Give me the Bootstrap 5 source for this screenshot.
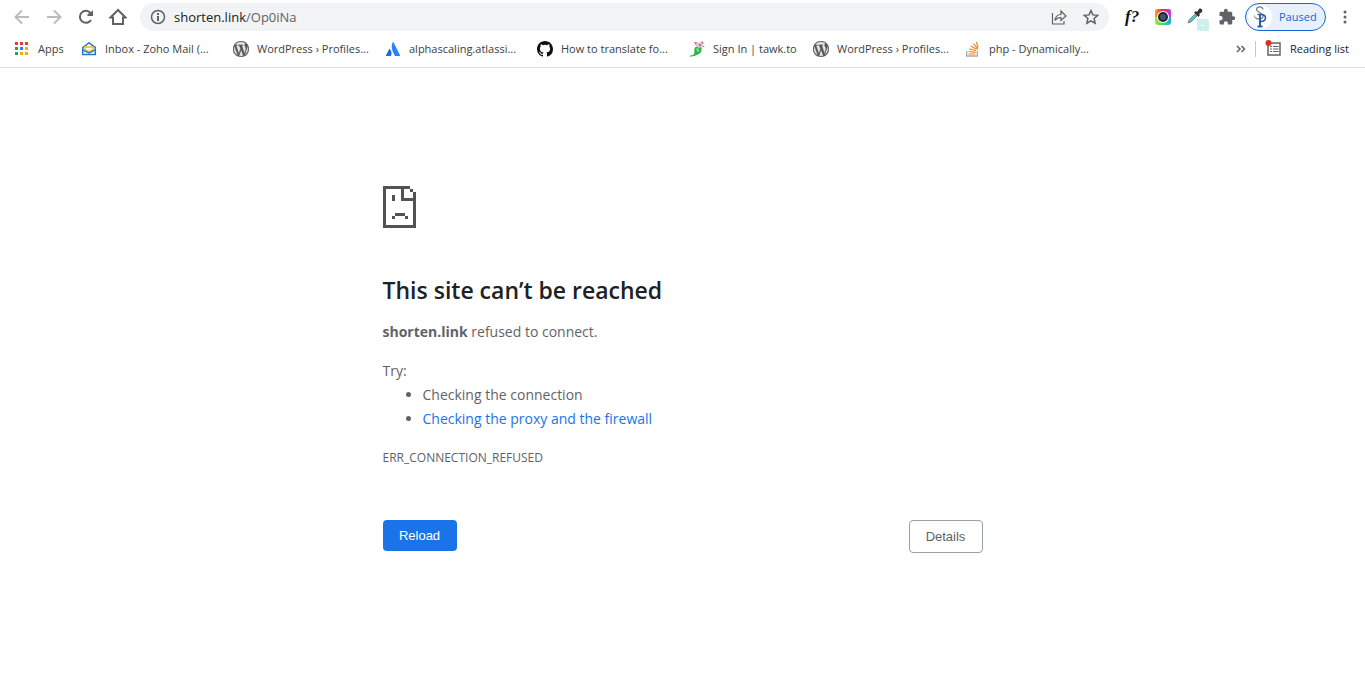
<!DOCTYPE html>
<html lang="en">
<head>
<meta charset="utf-8">
<meta name="viewport" content="width=device-width, initial-scale=1">
<title>shorten.link</title>
<link href="https://cdn.jsdelivr.net/npm/bootstrap@5.3.0/dist/css/bootstrap.min.css" rel="stylesheet">
<style>
  body { font-family: "Open Sans", "Noto Sans", sans-serif; color: #5f6368; background: #fff; font-size: 14px; }
  svg { display: block; flex-shrink: 0; }
  .tool-btn { border: 0; background: none; padding: 0; width: 32px; height: 32px; display: flex; align-items: center; justify-content: center; color: #5f6368; }
  .tool-btn:disabled { color: #babcbe; }
  .toolbar { height: 34px; padding: 0 4px 0 6px; }
  .omnibox { height: 28px; background: #f1f3f4; border-radius: 14px; margin: 0 6px; padding: 0 2px 0 10px; }
  .address { border: 0; background: none; outline: 0; padding: 0; width: 100%; opacity: 0; cursor: text; position: absolute; inset: 0; }
  .url-text { font-size: 13px; line-height: 20px; color: #5f6368; }
  .url-text b { color: #202124; font-weight: 400; }
  .profile { width: 81px; height: 28px; border: 1px solid #1967d2; border-radius: 14px; background: #e8f0fe; color: #1967d2; font-size: 11px; padding: 0 0 0 2px; gap: 7px; margin: 0 3px 0 2px; }
  .bookmarks { height: 34px; padding: 0 13px 4px 14px; border-bottom: 1px solid #dadce0; font-size: 11px; line-height: 16px; }
  .bookmarks a { color: #3c4043; text-decoration: none; display: flex; align-items: center; gap: 8px; flex-shrink: 0; white-space: nowrap; }
  .bm-apps { width: 67px; }
  .bm-long { width: 152px; }
  .bm-short { width: 124px; }
  .bm-reading { width: 87px; }
  .bm-divider { width: 1px; height: 16px; background: #c6c8cb; margin: 0 9px; }
  .error-page { max-width: 600px; margin: 118px auto 0; line-height: 24px; }
  .error-page h1 { font-size: 23px; line-height: 28px; font-weight: 600; color: #202124; margin: 48px 0 16px; }
  .error-page p { margin: 0 0 15px; }
  .error-page ul { padding-left: 40px; margin: 0 0 15px; }
  .error-page li a { color: #1a73e8; text-decoration: none; }
  .error-page .try-lead { margin: 0; }
  .error-page .err-code { font-size: 12px; margin: 0 0 50px; }
  .action { font-family: "Liberation Sans", Arial, sans-serif; font-size: 13px; line-height: 15px; padding: 8px 15px; width: 74px; border-radius: 4px; white-space: nowrap; }
  .action-reload { background: #1a73e8; border: 0; color: #fff; }
  .action-details { background: #fff; border: 1px solid #9aa0a6; color: #5f6368; }
</style>
</head>
<body>
<svg width="0" height="0" class="position-absolute" aria-hidden="true">
  <symbol id="wp" viewBox="0 0 24 24"><circle cx="12" cy="12" r="11" fill="#e4e4e4"/><path fill="#555" stroke="#555" stroke-width=".5" d="M12 0C5.400 0 0 5.400 0 12s5.400 12 12 12 12-5.400 12-12S18.600 0 12 0zm0 1.200c2.800 0 5.400 1.100 7.300 2.800h-.2c-1.100 0-1.800.9-1.800 1.900 0 .9.500 1.600 1.100 2.600.4.800.9 1.700.9 3.100 0 1-.4 2.100-.9 3.700l-1.100 3.800-4.100-12.300 1.300-.1c.6-.1.500-1-.1-.9 0 0-1.800.1-3 .1-1.100 0-3-.1-3-.1-.6 0-.7.900-.1.900l1.200.1 1.800 4.800-2.500 7.500L4.700 6.800 6 6.700c.6-.1.500-1-.1-.9 0 0-1.800.1-3 .1A10.800 10.800 0 0 1 12 1.200zM1.200 12c0-1.600.3-3 1-4.400l5.100 14.100A10.800 10.800 0 0 1 1.200 12zM12 22.800c-1.100 0-2.100-.2-3-.4l3.200-9.400 3.300 9.100.1.200c-1.100.3-2.300.5-3.600.5zm5.400-1.500 3.300-9.500c.6-1.500.8-2.800.8-3.900v-1a10.800 10.800 0 0 1-4.100 14.400z"/></symbol>
</svg>

<header>
  <div class="toolbar d-flex align-items-center">
    <button class="tool-btn" disabled aria-label="Back"><svg width="16" height="16" fill="none" stroke="currentColor" stroke-width="2"><path d="M15 8H2M8 1.500 1.500 8 8 14.500"/></svg></button>
    <button class="tool-btn" disabled aria-label="Forward"><svg width="16" height="16" fill="none" stroke="currentColor" stroke-width="2"><path d="M1 8h13M8 1.500 14.500 8 8 14.500"/></svg></button>
    <button class="tool-btn" aria-label="Reload page"><svg width="16" height="16"><path d="M13 11a6 6 0 1 1-.5-7L10 6.500" fill="none" stroke="currentColor" stroke-width="2"/><path fill="currentColor" d="M15 1v6H9z"/></svg></button>
    <button class="tool-btn" aria-label="Home"><svg width="18" height="18" fill="none" stroke="currentColor" stroke-width="2"><path d="M1.500 9.500 9 2l7.500 7.500H14V16H4V9.500z"/></svg></button>
    <div class="omnibox d-flex align-items-center flex-grow-1">
      <svg width="16" height="16" fill="none" stroke="#5f6368" stroke-width="1.500"><circle cx="8" cy="8" r="6.500"/><path stroke-width="2" d="M8 7v5M8 4v2"/></svg>
      <div class="position-relative flex-grow-1 ms-2 url-text"><b>shorten.link</b>/Op0iNa<input class="address" type="text" value="shorten.link/Op0iNa" aria-label="Address"></div>
      <button class="tool-btn" aria-label="Share"><svg width="18" height="18" fill="none" stroke="currentColor" stroke-width="1.200"><path d="M2.500 5v11H14v-3M5 12.500C5.500 8.500 8 6.500 11 6.500V3l5 5-5 4.500V9.500c-2.500 0-4.500.8-6 3z"/></svg></button>
      <button class="tool-btn" aria-label="Bookmark"><svg width="16" height="16" fill="none" stroke="currentColor" stroke-width="1.500"><path d="m8 1.500 1.900 4.400 4.800.4-3.600 3.200 1 4.700L8 11.800l-4.100 2.400 1-4.700-3.600-3.200 4.800-.4z"/></svg></button>
    </div>
    <button class="tool-btn" aria-label="Font finder"><svg width="18" height="20" overflow="visible"><text x="3" y="15" font-family="Liberation Serif, serif" font-style="italic" font-weight="700" font-size="17" fill="#111">f?</text></svg></button>
    <button class="tool-btn" aria-label="Color camera"><svg width="16" height="16"><defs><linearGradient id="rbTop"><stop offset="0" stop-color="#ffa321"/><stop offset=".45" stop-color="#f5284f"/><stop offset="1" stop-color="#c43af0"/></linearGradient><linearGradient id="rbBottom"><stop offset="0" stop-color="#b8e02a"/><stop offset=".5" stop-color="#2ee06a"/><stop offset="1" stop-color="#1fa7f5"/></linearGradient></defs><rect width="16" height="16" rx="3" fill="url(#rbBottom)"/><path d="M0 8V3a3 3 0 0 1 3-3h10a3 3 0 0 1 3 3v5z" fill="url(#rbTop)"/><circle cx="8" cy="8" r="6" fill="#fff"/><circle cx="8" cy="8" r="5" fill="#1b2733"/><circle cx="8" cy="8" r="3" fill="#40566a"/></svg></button>
    <button class="tool-btn" aria-label="Color picker"><svg width="24" height="26" overflow="visible"><path d="m5 19 1-3 6-6 2 2-6 6z" fill="#53c4c8" stroke="#777" stroke-width=".8"/><path d="M11 8.500 13 7l1 1 2-3c1.500-1.500 4.500 1 3 3l-3 2 1 1-1.500 2z" fill="#303336"/><rect x="14" y="15" width="12" height="12" rx="2" fill="#cdf0ee"/><path d="M18 21.500h3" stroke="#fff"/></svg></button>
    <button class="tool-btn" aria-label="Extensions"><svg width="18" height="18" viewBox="0 0 24 24" fill="currentColor"><path d="M20.500 11H19V7c0-1.100-.9-2-2-2h-4V3.500a2.500 2.500 0 0 0-5 0V5H4c-1.100 0-2 .9-2 2v3.800h1.500a2.700 2.700 0 0 1 0 5.400H2V20c0 1.100.9 2 2 2h3.800v-1.500a2.700 2.700 0 0 1 5.400 0V22H17c1.100 0 2-.9 2-2v-4h1.500a2.500 2.500 0 0 0 0-5z"/></svg></button>
    <button class="profile d-flex align-items-center"><svg width="24" height="24"><circle cx="12" cy="12" r="12" fill="#fff"/><g fill="none"><path d="M15 4.500C14.500 1 8.500 1 8.500 4.500c0 3 6.500 3 6.500 6.500 0 3-4 4-7 2" stroke="#7a8087" stroke-width="1.300"/><path d="M6.500 10.500c0 2 1 3 2.500 3.500" stroke="#7a8087"/><path d="M12 9.500V21M9.500 21.500h5" stroke="#2b5fa8" stroke-width="2"/><path d="M9.500 9.500h4c5.500 0 5.500 7.500-1.500 7" stroke="#2b5fa8" stroke-width="1.600"/></g></svg>Paused</button>
    <button class="tool-btn" aria-label="Menu"><svg width="4" height="14" fill="currentColor"><circle cx="2" cy="2" r="1.500"/><circle cx="2" cy="7" r="1.500"/><circle cx="2" cy="12" r="1.500"/></svg></button>
  </div>

  <nav class="bookmarks d-flex align-items-center" aria-label="Bookmarks">
    <a href="#" class="bm-apps"><svg width="16" height="16"><path fill="#ea3a32" d="M1 1h3v3H1zM6 1h3v3H6zM11 1h3v3h-3z"/><path fill="#2e9e54" d="M1 6h3v3H1zM1 11h3v3H1z"/><path fill="#2587ef" d="M6 6h3v3H6z"/><path fill="#f2ad12" d="M11 6h3v3h-3zM6 11h3v3H6zM11 11h3v3h-3z"/></svg>Apps</a>
    <a href="#" class="bm-long"><svg width="16" height="16" fill="none"><path d="M1.700 6.500 8 2l6.300 4.500v7H1.700z" stroke="#2876c7" stroke-width="1.500"/><path d="m2 9 6 3 6-3" stroke="#2876c7" stroke-width="1.500"/><path d="M4 8.500V6h8v2.500l-4 2z" fill="#fff" stroke="#f2b42c" stroke-width="1.300"/></svg>Inbox - Zoho Mail (...</a>
    <a href="#" class="bm-long"><svg width="16" height="16"><use href="#wp"/></svg>WordPress › Profiles...</a>
    <a href="#" class="bm-long"><svg width="16" height="16"><path fill="#1e6be0" d="M4.500 7.500C6.800 10 7 12.500 5.800 15H1.500c-.5 0-.7-.4-.5-.8z"/><path fill="#2684ff" d="M7.700 1.300c.2-.4.600-.4.800 0L15 14.200c.2.400 0 .8-.5.800H10C8.700 12 5 7.500 7.700 1.300z"/></svg>alphascaling.atlassi...</a>
    <a href="#" class="bm-long"><svg width="16" height="16" viewBox="0 0 16 16"><path fill="#111" d="M8 0C3.580 0 0 3.580 0 8c0 3.540 2.290 6.530 5.470 7.590.4.070.55-.17.55-.38 0-.19-.01-.82-.01-1.490-2.010.37-2.530-.49-2.690-.94-.09-.23-.48-.94-.82-1.130-.28-.15-.68-.52-.01-.53.63-.01 1.080.58 1.230.82.72 1.210 1.870.87 2.330.66.07-.52.28-.87.51-1.070-1.780-.2-3.640-.89-3.640-3.950 0-.87.31-1.590.82-2.150-.08-.2-.36-1.020.08-2.120 0 0 .67-.21 2.200.82a7.600 7.600 0 0 1 4 0c1.530-1.040 2.200-.82 2.200-.82.44 1.100.16 1.920.08 2.120.51.56.82 1.270.82 2.150 0 3.070-1.870 3.750-3.650 3.950.29.25.54.73.54 1.480 0 1.070-.01 1.930-.01 2.200 0 .21.15.46.55.38A8.010 8.010 0 0 0 16 8c0-4.420-3.580-8-8-8z"/></svg>How to translate fo...</a>
    <a href="#" class="bm-short"><svg width="16" height="16"><path fill="#2bb24c" d="M6.500 6 12 5c1.500 3 .5 7-3 8.500-2 .5-3 2-8.500 2-.5-1.500 3.500-.5 4.500-2.500C6 11 4.500 8 6.500 6z"/><path fill="#80d983" d="M7.500 7c2-.5 3 1 2.500 3.500-2 1.500-3-1-2.500-3.500z"/><path fill="#c9ccd0" d="M6 2c3-1.500 7-1 8 1.500.5 2-1 3.500-3 3C8.500 7.500 6 5 6 2z"/><path fill="#f45b9c" d="M5 1l3 .2L6.500 4zM11.500 1.500c1.500-2 3.500-.5 3 1.500zM13.500 5H16l-2 1.500z"/><circle cx="11" cy="4" r=".7" fill="#222"/></svg>Sign In | tawk.to</a>
    <a href="#" class="bm-long"><svg width="16" height="16"><use href="#wp"/></svg>WordPress › Profiles...</a>
    <a href="#"><svg width="16" height="16" fill="none"><path d="M1.700 10v5h10.600v-5" stroke="#a8abae" stroke-width="1.300"/><path d="M3.500 13h7M3.600 10.500l7 .8M4.200 7.800l6.700 2M5.800 5l6 3.600M8.500 2.500l4.200 5.300M11.500 1l1.500 5.500" stroke="#f48024" stroke-width="1.200"/></svg>php - Dynamically...</a>
    <a href="#" class="ms-auto" aria-label="More bookmarks"><svg width="10" height="8" fill="none" stroke="#5f6368" stroke-width="1.500"><path d="m1 1 3 3-3 3M5.500 1l3 3-3 3"/></svg></a>
    <span class="bm-divider"></span>
    <a href="#" class="bm-reading"><svg width="17" height="17" fill="none"><path d="M3 3h12v12H3z" stroke="#5f6368" stroke-width="1.500"/><path d="M5 6.500h2M8 6.500h5.500M5 9h2M8 9h5.500M5 11.500h2M8 11.500h5.500" stroke="#5f6368"/><circle cx="3.500" cy="3" r="3" fill="#d93025"/></svg><span class="text-dark">Reading list</span></a>
  </nav>
</header>

<main class="error-page">
  <svg width="33" height="42" fill="#535353" shape-rendering="crispEdges" role="img" aria-label="Sad page"><path d="M0 0h27v3H3v36h27V15H18V3h3v9h9V6h3v36H0zM27 3h3v3h-3zM9 9h3v6H9zM12 27h10v3H12zM9 30h3v3H9zM22 30h3v3h-3z"/></svg>
  <h1>This site can’t be reached</h1>
  <p><strong>shorten.link</strong> refused to connect.</p>
  <p class="try-lead">Try:</p>
  <ul>
    <li>Checking the connection</li>
    <li><a href="#">Checking the proxy and the firewall</a></li>
  </ul>
  <p class="err-code">ERR_CONNECTION_REFUSED</p>
  <div class="d-flex justify-content-between align-items-start">
    <button class="action action-reload">Reload</button>
    <button class="action action-details">Details</button>
  </div>
</main>
<script src="https://cdn.jsdelivr.net/npm/bootstrap@5.3.0/dist/js/bootstrap.bundle.min.js"></script>
</body>
</html>
